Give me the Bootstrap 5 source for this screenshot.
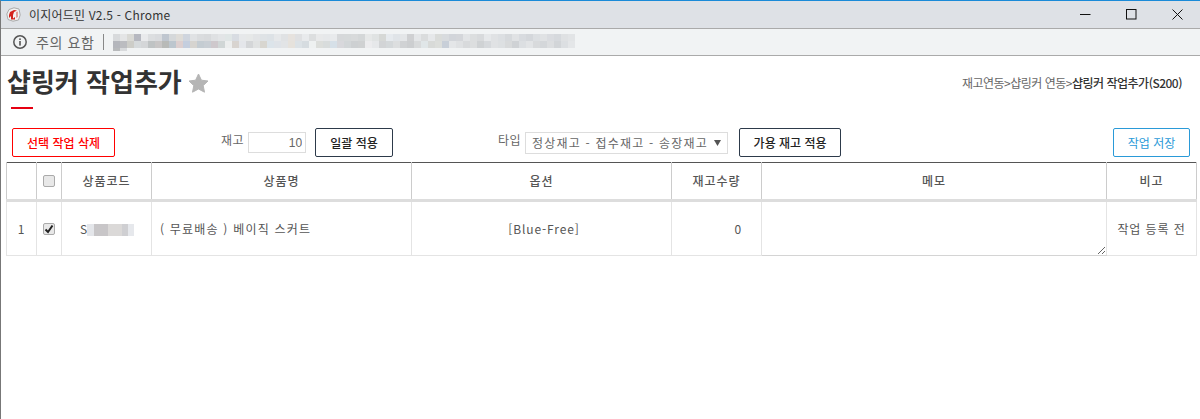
<!DOCTYPE html>
<html lang="ko">
<head>
    <meta charset="UTF-8">
    <meta name="viewport" content="width=device-width, initial-scale=1.0">
    <title>이지어드민 V2.5 - Chrome</title>
    <link href="https://cdn.jsdelivr.net/npm/bootstrap@5.3.0/dist/css/bootstrap.min.css" rel="stylesheet">
    <style>
        html, body { height: 100%; }
        body {
            font-family: "Noto Sans CJK KR", "Liberation Sans", sans-serif;
            font-size: 12px;
            color: #555;
            background: #fff;
            overflow: hidden;
        }
        .app-window {
            height: 419px;
            border-top: 1px solid #1a8ad8;
            border-left: 1px solid #777;
        }
        .title-bar {
            height: 28px;
            background: #dee1e6;
            border-bottom: 1px solid #aaa;
            font-size: 12px;
            letter-spacing: .2px;
            color: #333;
            padding-left: 5px;
        }
        .win-btn { width: 46px; height: 27px; }
        .address-bar {
            height: 27px;
            background: #f1f3f4;
            border-bottom: 1px solid #aaa;
            padding-left: 11px;
            font-size: 14px;
            letter-spacing: .6px;
            color: #666;
        }
        .address-sep { width: 1px; height: 16px; background: #888; margin: 0 9px 0 9px; }
        .blurred-url { width: 462px; }
        .blur-row { height: 7px; }
        .blur-row:last-child { height: 3px; }
        .blur-cell { width: 7px; height: 100%; flex-shrink: 0; }
        .page-head { padding: 0 13px 0 6px; height: 72px; }
        .page-title { font-size: 26px; font-weight: 700; color: #333; line-height: 34px; margin: 8px 0 0; }
        .title-rule { width: 22px; height: 2px; background: #e60012; margin: 9px 0 0 4px; }
        .star-icon { margin-top: 11px; margin-left: 6px; }
        .crumbs { font-size: 12px; letter-spacing: -.5px; color: #666; margin-top: 18px; margin-right: 5px; }
        .crumbs b { font-weight: 500; color: #333; }
        .tool-row { padding: 0 10px 0 11px; height: 34px; }
        .tool-btn {
            height: 29px;
            padding: 0;
            font-size: 12px;
            font-weight: 500;
            border-radius: 2px;
            background: #fff;
            line-height: 1;
        }
        .btn-del { width: 103px; color: #f00; border: 1px solid #f00; }
        .btn-apply { border: 1px solid #2d3a4a; color: #222; }
        .btn-bulk { width: 78px; }
        .btn-usable { width: 102px; }
        .btn-save { width: 77px; color: #2a9ad8; border: 1px solid #2a9ad8; font-weight: 400; }
        .stock-box { margin-left: 106px; width: 177px; }
        .stock-input {
            width: 58px;
            height: 21px;
            border: 1px solid #ddd;
            font-size: 12px;
            text-align: right;
            color: #666;
            padding: 0 3px;
            margin: 0 9px 0 4px;
            font-family: "Liberation Sans", sans-serif;
        }
        .type-box { margin-left: 100px; }
        .type-select {
            width: 203px;
            height: 22px;
            border: 1px solid #ddd;
            font-size: 12px;
            color: #666;
            padding: 0 6px;
            margin: 0 11px 0 4px;
            letter-spacing: 1.2px;
            appearance: none;
            background: #fff url("data:image/svg+xml,%3Csvg xmlns='http://www.w3.org/2000/svg' width='7' height='6'%3E%3Cpath d='M0 0H7L3.5 6Z' fill='%23555'/%3E%3C/svg%3E") no-repeat right 6px center;
        }
        .small-label { color: #666; font-size: 12px; margin-top: -5px; letter-spacing: .5px; }
        .work-table {
            width: 1190px;
            margin: 0 0 0 5px;
            table-layout: fixed;
            border-collapse: collapse;
            border-top: 1px solid #555;
            font-size: 12px;
            letter-spacing: .9px;
            color: #555;
        }
        .col-narrow { width: 25px; }
        .col-num { width: 30px; }
        .col-mid { width: 90px; }
        .col-wide { width: 260px; }
        .col-memo { width: 345px; }
        .work-table th {
            height: 38px;
            font-weight: 500;
            text-align: center;
            vertical-align: middle;
            border: 1px solid #ccc;
            border-top: 0;
            border-bottom: 3px solid #ddd;
            padding: 0;
        }
        .work-table td {
            height: 55px;
            text-align: center;
            vertical-align: middle;
            border: 1px solid #e4e4e4;
            padding: 0;
        }
        .work-table td.memo-cell { vertical-align: top; border-bottom-color: #d4d4d4; }
        .memo-input {
            width: 100%;
            height: 53px;
            display: block;
            border: 0;
            outline: 0;
        }
        .code-blur {
            display: inline-block;
            width: 47px;
            height: 12px;
            vertical-align: -2px;
            background-image: linear-gradient(90deg, #e4e6ea 0 15%, #c8c6c8 15% 45%, #dbd9d8 45% 75%, #cfcfd2 75% 88%, #e6e8ec 88% 100%);
        }
        .code-cell { padding-left: 18px !important; letter-spacing: 0; }
        .pad-name { padding-left: 8px !important; letter-spacing: 1.2px; }
        .pad-option { padding-left: 5px !important; }
        .pad-qty { padding-right: 19px !important; }
        .row-check {
            appearance: none;
            width: 12px;
            height: 12px;
            margin: 0 auto;
            display: block;
            background: #e8e8e8;
            border: 1px solid #aaa;
            border-radius: 2px;
        }
        .row-check:checked {
            background: #e8e8e8 url("data:image/svg+xml,%3Csvg xmlns='http://www.w3.org/2000/svg' width='10' height='10'%3E%3Cpath d='M1.5 5.5 4 8 8.5 1.5' stroke='%23222' stroke-width='2' fill='none'/%3E%3C/svg%3E") no-repeat center;
        }
    </style>
</head>
<body>
    <div class="app-window d-flex flex-column">
        <!-- title bar -->
        <div class="title-bar d-flex align-items-center">
            <svg width="15" height="15" viewBox="0 0 15 15" class="me-2">
                <path d="M3 2.5 8 .8 13 2 14.2 8 12.5 13 7 14.2 2 12.5 .8 7Z" fill="#f2f2f2" stroke="#aaa" stroke-linejoin="round"/>
                <path d="M3 8 4 5 8 3 11 3.5 8 5 7 8 7 11.5 9 10 9 12.5 5 12.5 5 9 3 11Z" fill="#d4231c"/>
                <path d="M10 5 12 4.5 12 10 10 11Z" fill="#e3a09a"/>
            </svg>
            <span>이지어드민 V2.5 - Chrome</span>
            <div class="ms-auto d-flex">
                <div class="win-btn d-flex align-items-center justify-content-center">
                    <svg width="11" height="11" viewBox="0 0 11 11"><path d="M0 5.5H10.5" stroke="#111" fill="none"/></svg>
                </div>
                <div class="win-btn d-flex align-items-center justify-content-center">
                    <svg width="11" height="11" viewBox="0 0 11 11"><rect x=".5" y=".5" width="9.5" height="9.5" stroke="#111" fill="none"/></svg>
                </div>
                <div class="win-btn d-flex align-items-center justify-content-center">
                    <svg width="11" height="11" viewBox="0 0 11 11"><path d="M.5.5 10.5 10.5M10.5.5.5 10.5" stroke="#111" fill="none"/></svg>
                </div>
            </div>
        </div>

        <!-- address bar -->
        <div class="address-bar d-flex align-items-center">
            <svg width="16" height="16" viewBox="0 0 16 16" class="me-2">
                <circle cx="8" cy="8" r="6.2" fill="none" stroke="#555" stroke-width="1.5"/>
                <rect x="7.2" y="7" width="1.6" height="4.6" fill="#555"/>
                <rect x="7.2" y="4.4" width="1.6" height="1.6" fill="#555"/>
            </svg>
            <span>주의 요함</span>
            <span class="address-sep"></span>
            <div class="blurred-url" id="blurred-url"></div>
        </div>

        <!-- page heading -->
        <div class="page-head d-flex justify-content-between">
            <div>
                <div class="d-flex align-items-center">
                    <h1 class="page-title">샵링커 작업추가</h1>
                    <svg width="21" height="20" viewBox="0 0 21 20" class="star-icon">
                        <path d="M10.5 1 13.4 7.2 20 8 15.2 12.6 16.5 19.2 10.5 16 4.5 19.2 5.8 12.6 1 8 7.6 7.2Z" fill="#b5b5b5" stroke="#b5b5b5" stroke-linejoin="round"/>
                    </svg>
                </div>
                <div class="title-rule"></div>
            </div>
            <div class="crumbs">재고연동&gt;샵링커 연동&gt;<b>샵링커 작업추가(S200)</b></div>
        </div>

        <!-- toolbar -->
        <div class="tool-row d-flex align-items-start">
            <button type="button" class="btn tool-btn btn-del">선택 작업 삭제</button>
            <div class="stock-box d-flex align-items-center flex-shrink-0">
                <span class="small-label">재고</span>
                <input class="stock-input" type="text" value="10">
                <button type="button" class="btn tool-btn btn-apply btn-bulk flex-shrink-0">일괄 적용</button>
            </div>
            <div class="type-box d-flex align-items-center">
                <span class="small-label">타입</span>
                <select class="type-select"><option>정상재고 - 접수재고 - 송장재고</option></select>
                <button type="button" class="btn tool-btn btn-apply btn-usable">가용 재고 적용</button>
            </div>
            <button type="button" class="btn tool-btn btn-save ms-auto">작업 저장</button>
        </div>

        <!-- work table -->
        <table class="work-table">
            <colgroup>
                <col class="col-num"><col class="col-narrow"><col class="col-mid"><col class="col-wide">
                <col class="col-wide"><col class="col-mid"><col class="col-memo"><col class="col-mid">
            </colgroup>
            <thead>
                <tr>
                    <th></th>
                    <th><input type="checkbox" class="row-check"></th>
                    <th>상품코드</th>
                    <th>상품명</th>
                    <th>옵션</th>
                    <th>재고수량</th>
                    <th>메모</th>
                    <th>비고</th>
                </tr>
            </thead>
            <tbody>
                <tr>
                    <td>1</td>
                    <td><input type="checkbox" class="row-check" checked></td>
                    <td class="text-start code-cell">S<span class="code-blur"></span></td>
                    <td class="text-start pad-name">( 무료배송 ) 베이직 스커트</td>
                    <td class="pad-option">[Blue-Free]</td>
                    <td class="text-end pad-qty">0</td>
                    <td class="memo-cell"><textarea class="memo-input"></textarea></td>
                    <td>작업 등록 전</td>
                </tr>
            </tbody>
        </table>
    </div>

    <script>
        // mosaic over the hidden address
        const blurRows = [
            'd8dadc e4e5e6 d9d9d5 b6b8c0 e9eaec dcdee0 d9dbde bfc6cf d5d8da dedcd8 cfd5de e0e2e4 dadcde d8dadc dfe1e3 e3e5e7 e0e6e6 d8dce2 e6e8ea e6e8e8 e2e4e6 dfe3e6 dde2e6 e6e8ea e0e2e4 e6e2de dfe0e2 e8eaec dcdedf e8e9ea e6e8ea e8eaec d6d8da d6d9da d8dadb d4d7d8 e6e8e8 e0e3e3 d6d8d6 e6eaee e0e4e8 e4e6e8 cfd0d2 e4e6e8 dadcdd e6e8ea dadcda d8dbde d2d5da d4d6da e2e4e6 dcdedf d8dadc e6e8ea e0e2e4 dcdfe2 d6d9dc e0e2e4 d8dbdf d4d7db dcdfe2 e0e2e4 dadce0 d6d9dd dfe1e3 e2e4e6',
            'b4b6bc bbbcc0 cdcdc8 d6dadc d4d6d8 bfc3c4 c8c6c6 b8bab8 bcc6ce dccfcf c4cede d6d4d0 c4ccd2 c8ced4 cec8cc d0d6d6 eceeee d8d4d0 e4e6ea d4d6d8 e0e2e2 d8d6d0 dce4ea dfe3e8 e2e4e6 e6e2dc dce2e6 d6dce0 eef1f1 dcdedb d8dcdc d6e0e8 d8d8dc d2d6d8 cdd0d2 cfd1d2 ececee e6e8ea d2d4d6 d4d8da dcdedf d0d2d4 ccced0 d8dadb e0e6e8 d8dad8 dcdedb c8cfd8 e4e6e8 dfe1e3 d8dadc dcdedf cfd2d4 d6d9dc e0e2e4 dde0e2 d8dadb cfd2d5 dcdfe2 e2e4e6 d8dadc d4d7da dcdee0 d2d5d8 dcdfe2 e4e6e8',
            'b8babc d8dadc'
        ];
        const blurBox = document.getElementById('blurred-url');
        blurRows.forEach(row => {
            const rowEl = document.createElement('div');
            rowEl.className = 'blur-row d-flex';
            row.split(' ').forEach(color => {
                const cell = document.createElement('span');
                cell.className = 'blur-cell';
                cell.style.background = '#' + color;
                rowEl.appendChild(cell);
            });
            blurBox.appendChild(rowEl);
        });
    </script>
    <script src="https://cdn.jsdelivr.net/npm/bootstrap@5.3.0/dist/js/bootstrap.bundle.min.js"></script>
</body>
</html>
